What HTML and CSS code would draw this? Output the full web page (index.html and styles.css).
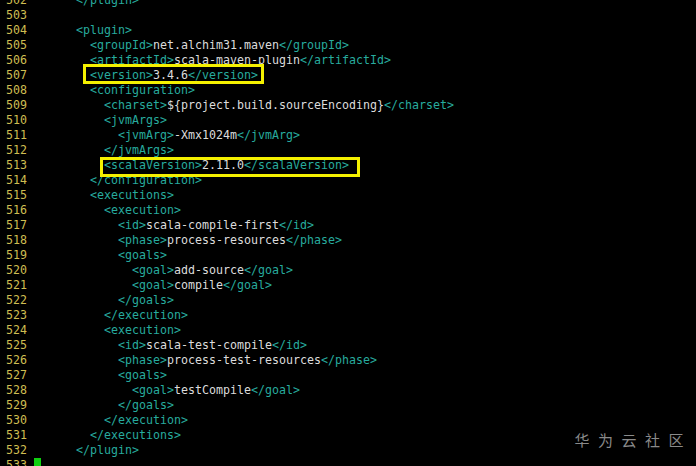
FILE: index.html
```html
<!DOCTYPE html>
<html>
<head>
<meta charset="utf-8">
<link rel="stylesheet" href="styles.css">
</head>
<body>
<div class="editor">
<div class="line"><span class="num">502</span><span class="code">      <span class="t">&lt;/plugin&gt;</span></span></div>
<div class="line"><span class="num">503</span><span class="code"></span></div>
<div class="line"><span class="num">504</span><span class="code">      <span class="t">&lt;plugin&gt;</span></span></div>
<div class="line"><span class="num">505</span><span class="code">        <span class="t">&lt;groupId&gt;</span>net.alchim31.maven<span class="t">&lt;/groupId&gt;</span></span></div>
<div class="line"><span class="num">506</span><span class="code">        <span class="t">&lt;artifactId&gt;</span>scala-maven-plugin<span class="t">&lt;/artifactId&gt;</span></span></div>
<div class="line"><span class="num">507</span><span class="code">        <span class="mark mark-a"><span class="t">&lt;version&gt;</span>3.4.6<span class="t">&lt;/version&gt;</span></span></span></div>
<div class="line"><span class="num">508</span><span class="code">        <span class="t">&lt;configuration&gt;</span></span></div>
<div class="line"><span class="num">509</span><span class="code">          <span class="t">&lt;charset&gt;</span>${project.build.sourceEncoding}<span class="t">&lt;/charset&gt;</span></span></div>
<div class="line"><span class="num">510</span><span class="code">          <span class="t">&lt;jvmArgs&gt;</span></span></div>
<div class="line"><span class="num">511</span><span class="code">            <span class="t">&lt;jvmArg&gt;</span>-Xmx1024m<span class="t">&lt;/jvmArg&gt;</span></span></div>
<div class="line"><span class="num">512</span><span class="code">          <span class="t">&lt;/jvmArgs&gt;</span></span></div>
<div class="line"><span class="num">513</span><span class="code">          <span class="mark mark-b"><span class="t">&lt;scalaVersion&gt;</span>2.11.0<span class="t">&lt;/scalaVersion&gt;</span></span></span></div>
<div class="line"><span class="num">514</span><span class="code">        <span class="t">&lt;/configuration&gt;</span></span></div>
<div class="line"><span class="num">515</span><span class="code">        <span class="t">&lt;executions&gt;</span></span></div>
<div class="line"><span class="num">516</span><span class="code">          <span class="t">&lt;execution&gt;</span></span></div>
<div class="line"><span class="num">517</span><span class="code">            <span class="t">&lt;id&gt;</span>scala-compile-first<span class="t">&lt;/id&gt;</span></span></div>
<div class="line"><span class="num">518</span><span class="code">            <span class="t">&lt;phase&gt;</span>process-resources<span class="t">&lt;/phase&gt;</span></span></div>
<div class="line"><span class="num">519</span><span class="code">            <span class="t">&lt;goals&gt;</span></span></div>
<div class="line"><span class="num">520</span><span class="code">              <span class="t">&lt;goal&gt;</span>add-source<span class="t">&lt;/goal&gt;</span></span></div>
<div class="line"><span class="num">521</span><span class="code">              <span class="t">&lt;goal&gt;</span>compile<span class="t">&lt;/goal&gt;</span></span></div>
<div class="line"><span class="num">522</span><span class="code">            <span class="t">&lt;/goals&gt;</span></span></div>
<div class="line"><span class="num">523</span><span class="code">          <span class="t">&lt;/execution&gt;</span></span></div>
<div class="line"><span class="num">524</span><span class="code">          <span class="t">&lt;execution&gt;</span></span></div>
<div class="line"><span class="num">525</span><span class="code">            <span class="t">&lt;id&gt;</span>scala-test-compile<span class="t">&lt;/id&gt;</span></span></div>
<div class="line"><span class="num">526</span><span class="code">            <span class="t">&lt;phase&gt;</span>process-test-resources<span class="t">&lt;/phase&gt;</span></span></div>
<div class="line"><span class="num">527</span><span class="code">            <span class="t">&lt;goals&gt;</span></span></div>
<div class="line"><span class="num">528</span><span class="code">              <span class="t">&lt;goal&gt;</span>testCompile<span class="t">&lt;/goal&gt;</span></span></div>
<div class="line"><span class="num">529</span><span class="code">            <span class="t">&lt;/goals&gt;</span></span></div>
<div class="line"><span class="num">530</span><span class="code">          <span class="t">&lt;/execution&gt;</span></span></div>
<div class="line"><span class="num">531</span><span class="code">        <span class="t">&lt;/executions&gt;</span></span></div>
<div class="line"><span class="num">532</span><span class="code">      <span class="t">&lt;/plugin&gt;</span></span></div>
<div class="line"><span class="num">533</span><span class="code"><span class="cursor"></span></span></div>
</div>
<div class="watermark">华为云社区</div>
</body>
</html>
```
FILE: styles.css
```css
html, body {
  margin: 0;
  padding: 0;
  background: #000;
  overflow: hidden;
  height: 466px;
}
.editor {
  margin-top: -7.5px;
  font-family: "DejaVu Sans Mono", monospace;
  font-size: 11.63px;
  line-height: 15px;
  color: #dcdcdc;
}
.line {
  display: flex;
  height: 15px;
  padding-left: 6px;
}
.num {
  width: 21px;
  text-align: right;
  margin-right: 7px;
  color: #cfbe52;
  flex: none;
}
.code {
  white-space: pre;
}
.t {
  color: #27ab9e;
}
.mark {
  position: relative;
}
.mark::after {
  content: "";
  position: absolute;
  border: 3px solid #f4f000;
}
.mark-a::after {
  left: -7px;
  right: -6px;
  top: -3.5px;
  bottom: -2.5px;
}
.mark-b::after {
  left: -4px;
  right: -11px;
  top: -0.5px;
  bottom: -5.5px;
}
.cursor {
  display: inline-block;
  width: 7px;
  height: 15px;
  vertical-align: top;
  background: #10d010;
}
.watermark {
  position: absolute;
  right: 4px;
  bottom: 17px;
  font-family: "Noto Sans CJK SC", sans-serif;
  font-size: 15px;
  letter-spacing: 8.5px;
  color: #8a8a8a;
  line-height: 18px;
}
```
